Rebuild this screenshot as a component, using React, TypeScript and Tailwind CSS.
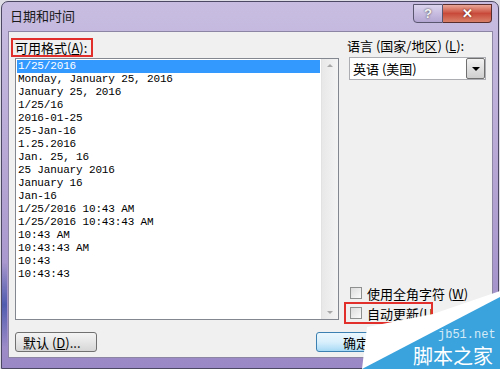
import React from "react";

const formats = [
  "1/25/2016",
  "Monday, January 25, 2016",
  "January 25, 2016",
  "1/25/16",
  "2016-01-25",
  "25-Jan-16",
  "1.25.2016",
  "Jan. 25, 16",
  "25 January 2016",
  "January 16",
  "Jan-16",
  "1/25/2016 10:43 AM",
  "1/25/2016 10:43:43 AM",
  "10:43 AM",
  "10:43:43 AM",
  "10:43",
  "10:43:43",
];

const cjk = "font-['Noto_Sans_CJK_SC','Noto_Sans',sans-serif]";

function Checkbox() {
  return (
    <div className="w-[12px] h-[12px] border border-[#8e8f8f] bg-gradient-to-br from-[#dcdcdc] to-[#fbfbfb] shrink-0" />
  );
}

function App() {
  return (
    <div className={`w-[500px] h-[369px] bg-[#dedde6] relative overflow-hidden pt-[1px] pl-[1px] ${cjk}`}>
      <div className="w-[498px] h-[368px] rounded-t-[7px] border border-[#4c4863] bg-gradient-to-b from-[#c8bde1] via-[#b4a4d3] to-[#9a88c6] flex flex-col">
        {/* title bar */}
        <div className="h-[29px] flex justify-between shrink-0">
          <div className="pl-[8px] pt-[6px] text-[13px] leading-[16px] text-[#1a1a1a]">日期和时间</div>
          <div className="flex mt-[2px] mr-[6px] h-[19px]">
            <div className="w-[30px] h-[19px] border border-[#5b5670] rounded-bl-[4px] bg-gradient-to-b from-[#dcd4ee] to-[#b4a6d2] flex items-center justify-center text-[13px] font-bold text-[#f4f4f4] [text-shadow:0_0_2px_#333] font-['Liberation_Sans',sans-serif]">
              ?
            </div>
            <div className="w-[49px] h-[19px] border border-l-0 border-[#5a2d2d] rounded-br-[4px] bg-gradient-to-b from-[#e9a697] via-[#c8493a] to-[#d8806a] flex items-center justify-center text-[13px] font-bold text-white [text-shadow:0_0_2px_#4a1010] font-['Liberation_Sans',sans-serif]">
              ✕
            </div>
          </div>
        </div>

        {/* client area */}
        <div className="ml-[6px] mr-[5px] h-[327px] bg-[#f0f0f0] border border-[#8c86a4] flex flex-col text-[13px] text-black">
          <div className="flex pl-[6px] pt-[6px]">
            {/* left column */}
            <div className="flex flex-col w-[324px]">
              <div className="h-[19px] -ml-[4px] w-[82px] border-2 border-[#e1302c] flex items-center pl-[2px] leading-none">
                可用格式(<span className="underline">A</span>):
              </div>
              <div className="mt-[1px] h-[262px] border border-[#828790] bg-white flex">
                <div className="flex-1 p-[1px] font-['Liberation_Mono',monospace] text-[11px] leading-[13px] tracking-[-0.15px]">
                  {formats.map((f, i) => (
                    <div
                      key={f}
                      className={
                        i === 0
                          ? "bg-[#3399ff] text-white pl-[1px] h-[13px] whitespace-pre"
                          : "pl-[1px] h-[13px] whitespace-pre"
                      }
                    >
                      {f}
                    </div>
                  ))}
                </div>
                <div className="w-[17px] bg-gradient-to-r from-[#e8e8e8] to-[#f4f4f4] border-l border-[#e2e2e2] flex flex-col justify-between items-center py-[5px]">
                  <div className="w-0 h-0 border-l-[3px] border-r-[3px] border-b-[3px] border-l-transparent border-r-transparent border-b-[#a8a8a8]" />
                  <div className="w-0 h-0 border-l-[3px] border-r-[3px] border-t-[3px] border-l-transparent border-r-transparent border-t-[#a8a8a8]" />
                </div>
              </div>
            </div>

            {/* right column */}
            <div className="ml-[8px] w-[139px] flex flex-col">
              <div className="h-[16px] leading-[16px] whitespace-nowrap">
                语言 (国家/地区) (<span className="underline">L</span>):
              </div>
              <div className="mt-[3px] ml-[2px] w-[137px] h-[23px] border border-[#abadb3] bg-white flex items-center">
                <div className="flex-1 pl-[3px] leading-none">英语 (美国)</div>
                <div className="w-[19px] h-[21px] border border-[#707070] rounded-[2px] bg-gradient-to-b from-[#f2f2f2] to-[#cfcfcf] flex items-center justify-center">
                  <div className="w-0 h-0 border-l-[4px] border-r-[4px] border-t-[4px] border-l-transparent border-r-transparent border-t-black" />
                </div>
              </div>
              <div className="mt-auto flex flex-col">
                <div className="flex items-center h-[16px] ml-[3px] gap-[5px]">
                  <Checkbox />
                  <span className="leading-none whitespace-nowrap">
                    使用全角字符 (<span className="underline">W</span>)
                  </span>
                </div>
                <div className="mt-[1px] -mb-[4px] -ml-[3px] w-[89px] h-[22px] border-2 border-[#e1302c] flex items-center pl-[4px] gap-[5px] overflow-hidden">
                  <Checkbox />
                  <span className="leading-none whitespace-nowrap">
                    自动更新(<span className="underline">U</span>)
                  </span>
                </div>
              </div>
            </div>
          </div>

          {/* buttons */}
          <div className="flex pl-[6px] mt-[12px]">
            <div className="w-[82px] h-[20px] border border-[#707070] rounded-[3px] bg-gradient-to-b from-[#f4f4f4] via-[#e6e6e6] to-[#d6d6d6] flex items-center pl-[7px] leading-none">
              默认 (<span className="underline">D</span>)...
            </div>
            <div className="ml-[219px] w-[80px] h-[20px] border border-[#3c7fb1] rounded-[3px] bg-gradient-to-b from-[#eaf6fd] via-[#d9f0fc] to-[#a7d9f5] flex items-center justify-center leading-none">
              确定
            </div>
          </div>
        </div>
      </div>

      {/* glass tint on the left frame */}
      <div className="absolute left-[2px] top-[262px] w-[5px] h-[86px] bg-gradient-to-b from-transparent via-[#3c4fa8] to-transparent opacity-80" />

      {/* watermark overlay */}
      <svg className="absolute left-[340px] top-[280px]" width="160" height="89" viewBox="0 0 160 89">
        <polygon points="27,47 93,34 160,11 160,89 22,89" fill="#ffffff" />
        <polygon points="22,89 160,17 160,89" fill="#3aa2dc" />
      </svg>
      <span className="absolute left-[438px] top-[329px] font-['Liberation_Mono',monospace] text-[12px] leading-none text-[#d4ebf8]">
        jb51.net
      </span>
      <span className="absolute left-[413px] top-[346px] text-[20px] leading-none text-white">
        脚本之家
      </span>
    </div>
  );
}

export default App;
